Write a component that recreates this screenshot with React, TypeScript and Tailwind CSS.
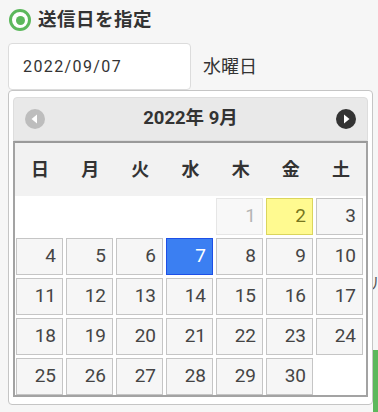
import React from 'react';

const WEEK = ['日', '月', '火', '水', '木', '金', '土'];

type Day = { n: number; kind: 'normal' | 'faded' | 'today' | 'active' } | null;

const buildDays = (): Day[] => {
  const days: Day[] = [null, null, null, null];
  for (let n = 1; n <= 30; n++) {
    let kind: 'normal' | 'faded' | 'today' | 'active' = 'normal';
    if (n === 1) kind = 'faded';
    if (n === 2) kind = 'today';
    if (n === 7) kind = 'active';
    days.push({ n, kind });
  }
  days.push(null);
  return days;
};

const cellClass = {
  normal: 'bg-[#f6f6f6] border-[#c5c5c5] text-[#454545]',
  faded: 'bg-[#f8f8f8] border-[#e6e6e6] text-[#b5b5b5]',
  today: 'bg-[#fffa90] border-[#dad55e] text-[#777620]',
  active: 'bg-[#3b7ff2] border-[#1d4fe6] text-white',
};

export default function App() {
  const days = buildDays();

  return (
    <div
      className="relative w-[378px] h-[412px] overflow-hidden bg-[#f6f6f6] text-[#333]"
      style={{ fontFamily: 'Roboto, "Noto Sans CJK JP", sans-serif' }}
    >
      {/* section title */}
      <div className="flex items-center gap-[7px] pl-[9px] pt-[9px] h-[31px]">
        <span className="w-[22px] h-[22px] rounded-full border-[3px] border-[#5cb85c] flex items-center justify-center bg-white">
          <span className="w-[9px] h-[9px] rounded-full bg-[#5cb85c]" />
        </span>
        <span className="text-[18.5px] font-bold leading-none tracking-[0.5px] text-[#333]">送信日を指定</span>
      </div>

      {/* date input */}
      <div className="flex items-center gap-[12px] pl-[8px] mt-[12px]">
        <div className="w-[183px] h-[47px] bg-white border border-[#dcdcdc] rounded-[4px] flex items-center pl-[14px] text-[16px] tracking-[1.4px] text-[#333]">
          2022/09/07
        </div>
        <span className="text-[18px] text-[#333]">水曜日</span>
      </div>

      {/* content hidden behind popup */}
      <div className="absolute left-[373px] top-[350px] w-[20px] h-[70px] bg-[#5cb85c]" />
      <div className="absolute left-[371px] top-[272px] text-[16px] text-[#555]">ル</div>

      {/* datepicker popup */}
      <div className="absolute left-[8px] top-[90px] w-[365px] bg-white border border-[#c5c5c5] rounded-[4px] pt-[6px] px-[4px] pb-[7px]">
        <div className="h-[44px] bg-[#e9e9e9] border border-[#dddddd] rounded-t-[4px] flex items-center justify-between px-[11px]">
          <svg width="20" height="20" viewBox="0 0 20 20">
            <circle cx="10" cy="10" r="10" fill="#bdbdbd" />
            <path d="M12 5.5 L6.5 10 L12 14.5 Z" fill="#ffffff" />
          </svg>
          <span className="text-[18.5px] font-bold text-[#333]">2022年 9月</span>
          <svg width="20" height="20" viewBox="0 0 20 20">
            <circle cx="10" cy="10" r="10" fill="#333333" />
            <path d="M8 5.5 L13.5 10 L8 14.5 Z" fill="#ffffff" />
          </svg>
        </div>

        <div className="border-2 border-[#a3a3a3] border-t-[#9a9a9a]">
          <div className="grid grid-cols-7 h-[53px] bg-[#f2f2f2] items-center">
            {WEEK.map((w) => (
              <div key={w} className="text-center text-[18px] font-bold text-[#333]">
                {w}
              </div>
            ))}
          </div>
          <div className="grid grid-cols-[repeat(7,47px)] gap-[3px] pl-[1px] pt-[2px]">
            {days.map((d, i) =>
              d ? (
                <div
                  key={i}
                  className={`h-[37px] border flex items-center justify-end pr-[6px] text-[19px] ${cellClass[d.kind]}`}
                >
                  {d.n}
                </div>
              ) : (
                <div key={i} className="h-[37px]" />
              ),
            )}
          </div>
        </div>
      </div>
    </div>
  );
}
